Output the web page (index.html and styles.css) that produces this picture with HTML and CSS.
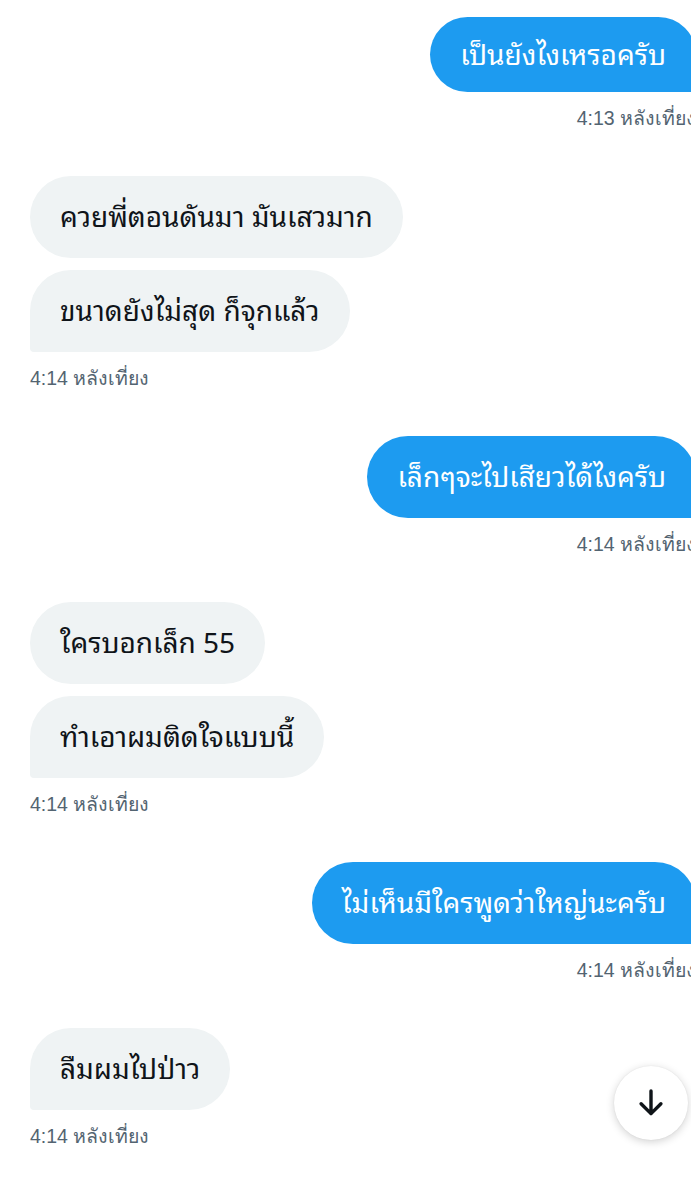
FILE: index.html
```html
<!DOCTYPE html>
<html lang="th">
<head>
  <meta charset="UTF-8" />
  <meta name="viewport" content="width=device-width, initial-scale=1" />
  <title>ข้อความ</title>
  <link rel="stylesheet" href="styles.css">
</head>
<body>

  <div class="chat">
    <div class="group out">
      <div class="bubble first-out">เป็นยังไงเหรอครับ</div>
      <div class="time">4:13 หลังเที่ยง</div>
    </div>

    <div class="group in">
      <div class="bubble">ควยพี่ตอนดันมา มันเสวมาก</div>
      <div class="bubble last">ขนาดยังไม่สุด ก็จุกแล้ว</div>
      <div class="time">4:14 หลังเที่ยง</div>
    </div>

    <div class="group out">
      <div class="bubble">เล็กๆจะไปเสียวได้ไงครับ</div>
      <div class="time">4:14 หลังเที่ยง</div>
    </div>

    <div class="group in">
      <div class="bubble">ใครบอกเล็ก 55</div>
      <div class="bubble last">ทำเอาผมติดใจแบบนี้</div>
      <div class="time">4:14 หลังเที่ยง</div>
    </div>

    <div class="group out">
      <div class="bubble">ไม่เห็นมีใครพูดว่าใหญ่นะครับ</div>
      <div class="time">4:14 หลังเที่ยง</div>
    </div>

    <div class="group in">
      <div class="bubble last">ลืมผมไปป่าว</div>
      <div class="time">4:14 หลังเที่ยง</div>
    </div>
  </div>

  <button class="scroll-down" aria-label="เลื่อนลง">
    <svg viewBox="0 0 24 24" width="34" height="34">
      <path d="M12 3.5v16M5 12.5l7 7 7-7" fill="none" stroke="#0f1419" stroke-width="2.4" stroke-linecap="round" stroke-linejoin="round"/>
    </svg>
  </button>

</body>
</html>
```

FILE: styles.css
```css
html, body {
  margin: 0;
  padding: 0;
  background: #ffffff;
  overflow: hidden;
}
body {
  font-family: "Noto Sans Thai Looped", "Loma", "Garuda", "Noto Sans", "Liberation Sans", sans-serif;
  color: #0f1419;
}
.chat {
  display: flex;
  flex-direction: column;
  padding: 17px 0 0 30px;
}
.group {
  display: flex;
  flex-direction: column;
  gap: 12px;
  margin-bottom: 46px;
}
.group.in {
  align-items: flex-start;
}
.group.out {
  align-items: flex-end;
  margin-right: -5px;
}
.bubble {
  height: 82px;
  line-height: 78px;
  padding: 0 30px;
  font-size: 28px;
  border-radius: 41px;
  white-space: nowrap;
}
.in .bubble {
  background: #eff3f4;
}
.in .bubble.last {
  border-bottom-left-radius: 4px;
}
.out .bubble {
  background: #1d9bf0;
  color: #ffffff;
  border-bottom-right-radius: 4px;
}
.out .bubble.first-out {
  height: 75px;
  line-height: 71px;
}
.time {
  font-family: "Liberation Sans", "Noto Sans", sans-serif;
  font-size: 19.5px;
  line-height: 24px;
  color: #536471;
  margin-top: 2px;
  white-space: nowrap;
}
.scroll-down {
  position: fixed;
  right: 3px;
  bottom: 60px;
  width: 74px;
  height: 74px;
  border-radius: 50%;
  border: none;
  background: #ffffff;
  box-shadow: 0 2px 8px rgba(0, 0, 0, 0.18), 0 0 2px rgba(0, 0, 0, 0.08);
  display: flex;
  align-items: center;
  justify-content: center;
  padding: 0;
  cursor: pointer;
}
```
